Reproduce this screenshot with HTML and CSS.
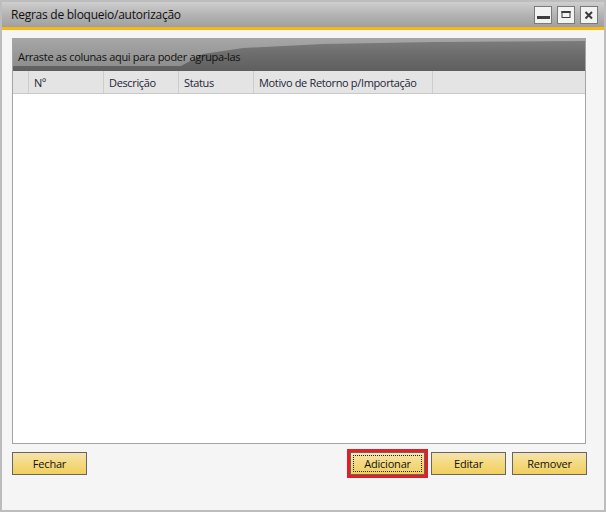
FILE: index.html
```html
<!DOCTYPE html>
<html lang="pt">
<head>
<meta charset="utf-8">
<title>Regras de bloqueio/autorização</title>
<link rel="stylesheet" href="styles.css">
</head>
<body>
<div class="window">
  <div class="titlebar">
    <span class="title">Regras de bloqueio/autorização</span>
    <div class="win-btns">
      <span class="wbtn"><svg width="16" height="16" viewBox="0 0 16 16"><rect x="2" y="9" width="13" height="3" fill="#3c3c3c"/></svg></span>
      <span class="wbtn"><svg width="16" height="16" viewBox="0 0 16 16"><rect x="4" y="4.5" width="8" height="6" fill="none" stroke="#3c3c3c" stroke-width="1"/><rect x="3.5" y="4" width="9" height="2" fill="#3c3c3c"/></svg></span>
      <span class="wbtn"><svg width="16" height="16" viewBox="0 0 16 16"><path d="M4.5 5 L11 11.5 M11 5 L4.5 11.5" stroke="#3c3c3c" stroke-width="2" fill="none"/></svg></span>
    </div>
  </div>
  <div class="accent"></div>
  <div class="content">
    <div class="grid">
      <div class="group-panel"><span class="group-text">Arraste as colunas aqui para poder agrupa-las</span></div>
      <div class="col-header">
        <div class="col col-ind"></div>
        <div class="col col-n">Nº</div>
        <div class="col col-desc">Descrição</div>
        <div class="col col-status">Status</div>
        <div class="col col-motivo">Motivo de Retorno p/Importação</div>
        <div class="col col-fill"></div>
      </div>
      <div class="grid-body"></div>
    </div>
    <div class="actions">
      <button class="btn btn-left">Fechar</button>
      <div class="right-btns">
        <button class="btn btn-focus"><span class="focus-ring">Adicionar</span></button>
        <button class="btn">Editar</button>
        <button class="btn">Remover</button>
      </div>
    </div>
  </div>
</div>
</body>
</html>
```
FILE: styles.css
```css
* { box-sizing: border-box; }
html, body { margin: 0; padding: 0; }
body {
  width: 606px;
  height: 512px;
  font-family: "Open Sans", "Noto Sans", sans-serif;
  font-size: 11px;
  color: #111;
  background: #ffffff;
}
.window {
  width: 606px;
  height: 512px;
  border: 2px solid #bdbdbd;
  background: #f5f5f5;
  display: flex;
  flex-direction: column;
}
.titlebar {
  height: 25px;
  background: linear-gradient(to bottom, #cfcfcf 0%, #b4b4b4 50%, #a0a0a0 100%);
  display: flex;
  align-items: center;
  justify-content: space-between;
  padding-left: 9px;
  padding-right: 6px;
}
.title {
  font-size: 12px;
  letter-spacing: -0.25px;
  color: #111;
}
.win-btns {
  display: flex;
  gap: 5px;
  padding-top: 1px;
}
.wbtn {
  width: 18px;
  height: 18px;
  border: 1px solid #7a7a7a;
  background: #f2f2f2;
  display: flex;
  align-items: center;
  justify-content: center;
}
.wbtn svg { display: block; }
.accent {
  height: 3px;
  background: #f8b712;
}
.content {
  flex: 1;
  padding: 8px 18px 0 10px;
  display: flex;
  flex-direction: column;
}
.grid {
  height: 406px;
  border: 1px solid #a4a4a4;
  background: #ffffff;
  display: flex;
  flex-direction: column;
}
.group-panel {
  position: relative;
  height: 32px;
  background: linear-gradient(to bottom, #7e7e7e 0%, #6c6c6c 50%, #5f5f5f 100%);
  display: flex;
  align-items: center;
  padding-left: 5px;
  overflow: hidden;
}
.group-panel::before {
  content: "";
  position: absolute;
  left: 0; top: 0; right: 0; bottom: 0;
  background: linear-gradient(to bottom, #a6a6a6 0%, #959595 60%, #8a8a8a 100%);
  clip-path: polygon(0 0, 100% 0, 100% 2px, 420px 3px, 310px 5px, 230px 9px, 190px 15px, 168px 27px, 0 27px);
}
.group-text {
  position: relative;
  color: #111;
  font-size: 11px;
  letter-spacing: -0.3px;
  top: 1px;
}
.col-header {
  height: 23px;
  background: #e4e4e4;
  border-bottom: 1px solid #c9c9c9;
  display: flex;
}
.col {
  border-right: 1px solid #cdcdcd;
  padding-left: 5px;
  display: flex;
  align-items: center;
  color: #1e2538;
  white-space: nowrap;
  letter-spacing: -0.35px;
}
.col-ind { width: 16px; }
.col-n { width: 75px; }
.col-desc { width: 75px; }
.col-status { width: 75px; }
.col-motivo { width: 179px; }
.col-fill { flex: 1; border-right: none; }
.grid-body { flex: 1; background: #ffffff; }
.actions {
  margin-top: 8px;
  display: flex;
  justify-content: space-between;
}
.btn-left { margin-left: -1px; }
.right-btns {
  display: flex;
  gap: 6px;
  margin-right: -1px;
}
.btn {
  width: 75px;
  height: 23px;
  border: 1px solid #666666;
  background: linear-gradient(to bottom, #f6e3ad 0%, #f4d97f 50%, #f2cf5c 100%);
  font-family: "Open Sans", "Noto Sans", sans-serif;
  font-size: 11px;
  letter-spacing: -0.2px;
  color: #111;
  padding: 0;
  margin: 0;
  display: flex;
  align-items: center;
  justify-content: center;
}
.btn-focus {
  outline: 3px solid #e01f27;
  padding: 2px;
}
.focus-ring {
  width: 100%;
  height: 100%;
  border: 1px dotted #222;
  display: flex;
  align-items: center;
  justify-content: center;
}
```
